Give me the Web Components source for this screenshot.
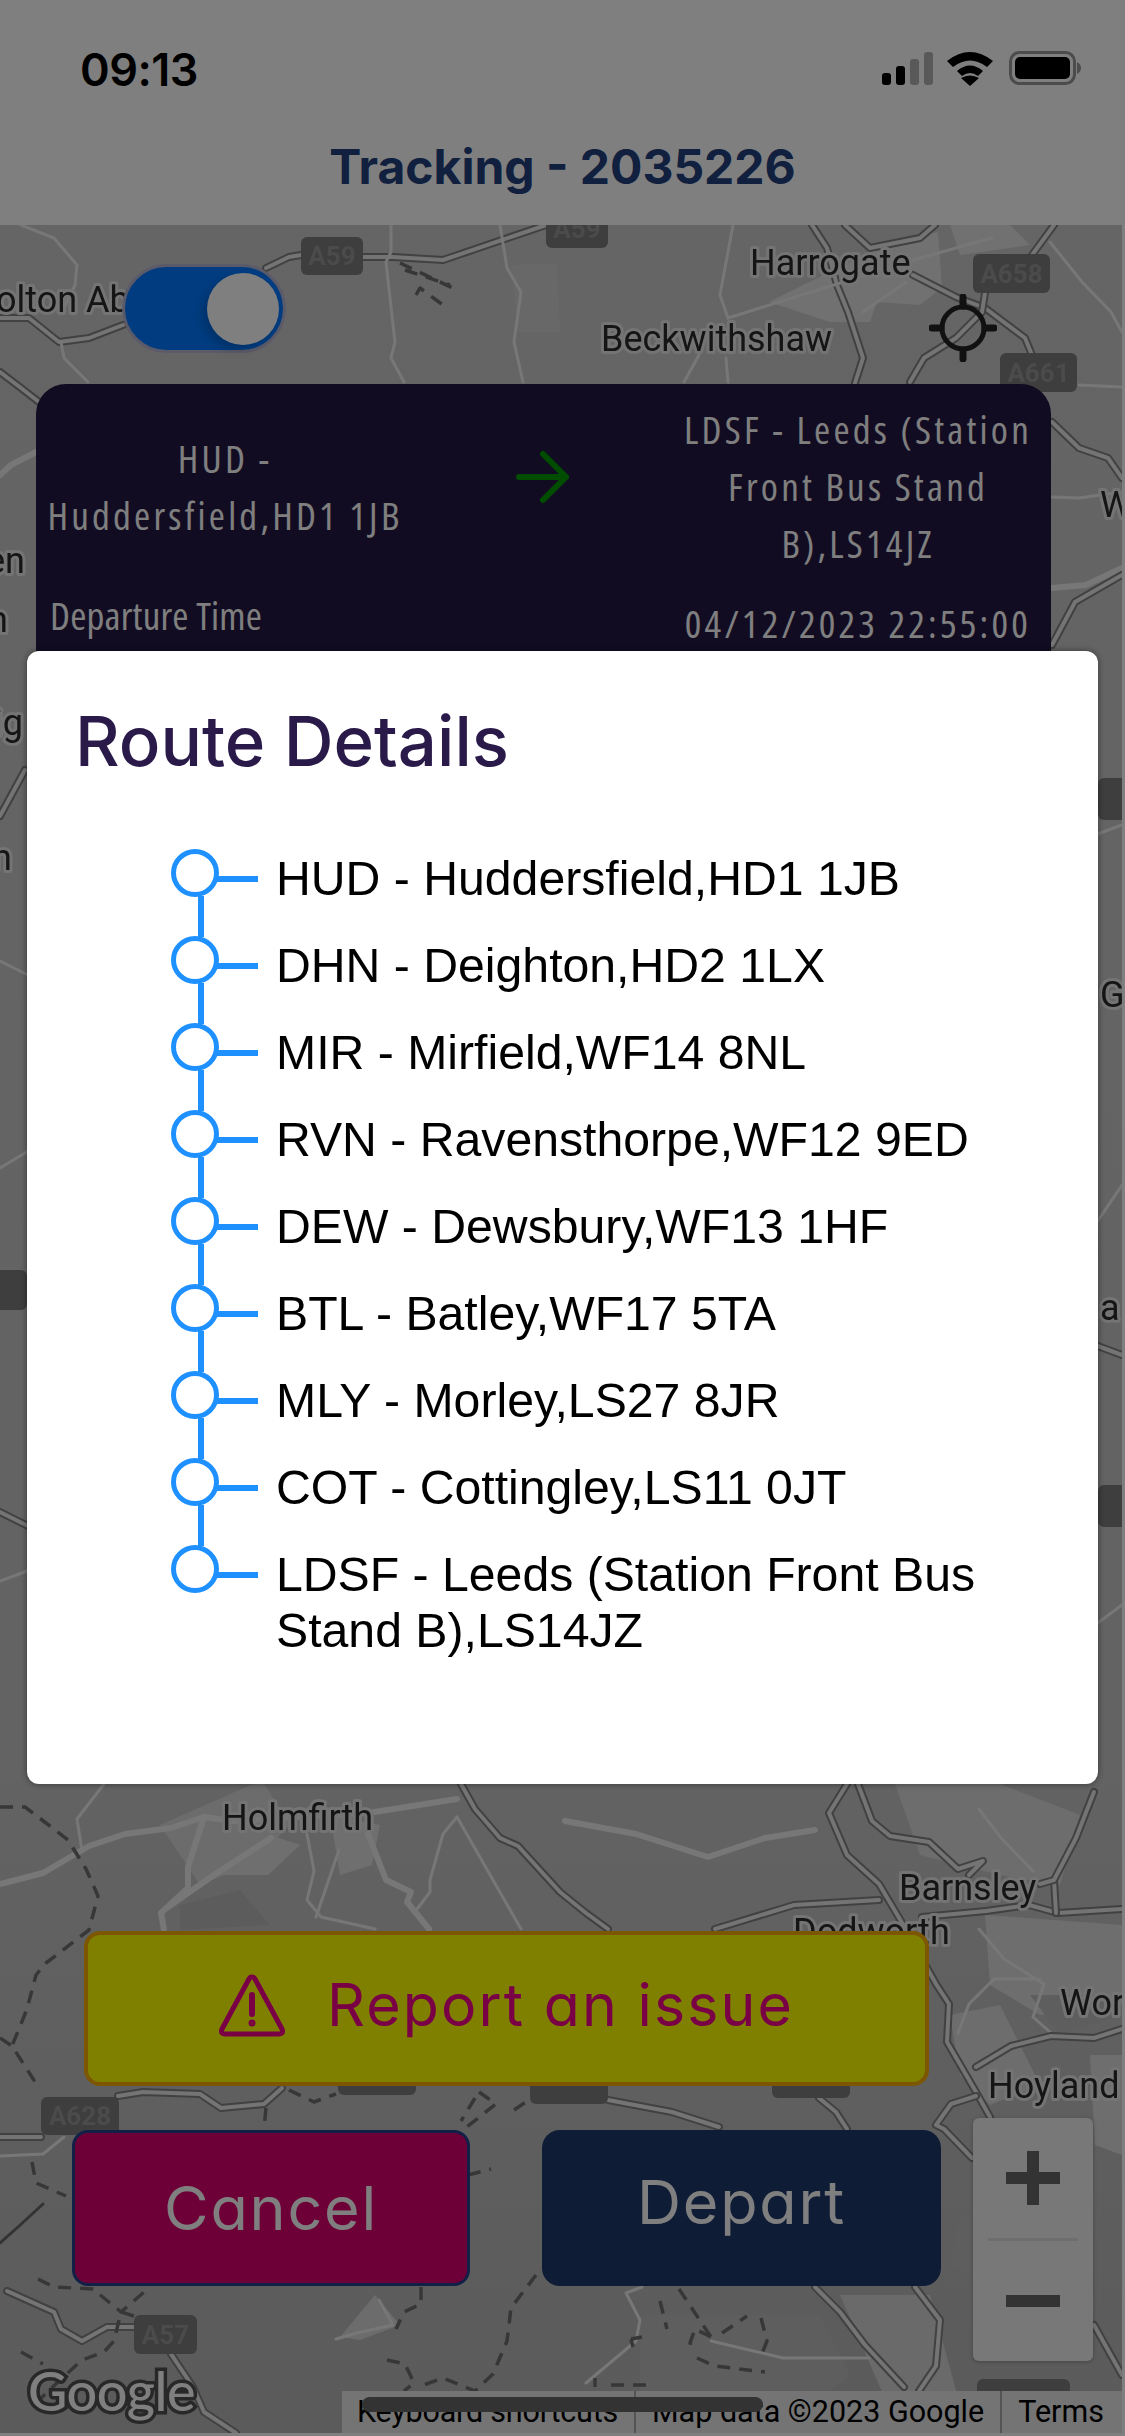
<!DOCTYPE html>
<html>
<head>
<meta charset="utf-8">
<title>Tracking</title>
<style>
html, body { margin: 0; padding: 0; background: #fff; }
</style>
</head>
<body>

<tracking-app>
    <status-bar slot="top" time="09:13"></status-bar>
    <app-header slot="top">Tracking - 2035226</app-header>

    <map-toolbar slot="map"></map-toolbar>
    <journey-card slot="map"
        from="HUD - Huddersfield,HD1 1JB"
        to="LDSF - Leeds (Station Front Bus Stand B),LS14JZ"
        time="04/12/2023 22:55:00"></journey-card>
    <action-bar slot="map"></action-bar>
    <map-chrome slot="map"></map-chrome>

    <route-modal slot="modal" heading="Route Details">
        <route-stop>HUD - Huddersfield,HD1 1JB</route-stop>
        <route-stop>DHN - Deighton,HD2 1LX</route-stop>
        <route-stop>MIR - Mirfield,WF14 8NL</route-stop>
        <route-stop>RVN - Ravensthorpe,WF12 9ED</route-stop>
        <route-stop>DEW - Dewsbury,WF13 1HF</route-stop>
        <route-stop>BTL - Batley,WF17 5TA</route-stop>
        <route-stop>MLY - Morley,LS27 8JR</route-stop>
        <route-stop>COT - Cottingley,LS11 0JT</route-stop>
        <route-stop last>LDSF - Leeds (Station Front Bus Stand B),LS14JZ</route-stop>
    </route-modal>
</tracking-app>

<script>
class TrackingApp extends HTMLElement {
    constructor() {
        super();
        this.attachShadow({mode: 'open'}).innerHTML = `
        <style>
            :host { display: block; position: relative; width: 1125px; height: 2436px; overflow: hidden; background: #fff; }
            .page { display: flex; flex-direction: column; height: 100%; }
            .stage { flex: 1; position: relative; margin: 0 3px 3px 0; min-height: 0; }
            .layer { position: relative; display: flex; flex-direction: column; height: 100%; box-sizing: border-box; padding-top: 39px; }
            .scrim { position: absolute; inset: 0; background: rgba(0,0,0,.5); }
            .modal { position: absolute; left: 27px; top: 651px; width: 1071px; }
        </style>
        <div class="page">
            <slot name="top"></slot>
            <div class="stage">
                <map-canvas></map-canvas>
                <div class="layer"><slot name="map"></slot></div>
            </div>
        </div>
        <div class="scrim"></div>
        <div class="modal"><slot name="modal"></slot></div>
        `;
    }
}

class StatusBar extends HTMLElement {
    constructor() {
        super();
        this.attachShadow({mode: 'open'}).innerHTML = `
        <style>
            :host { display: flex; align-items: center; justify-content: space-between; height: 138px; box-sizing: border-box; padding: 0 40px 0 80px; }
            .time { font: 600 45px Inter, sans-serif; color: #000; letter-spacing: -.5px; }
            svg { display: block; }
        </style>
        <span class="time">${this.getAttribute('time')}</span>
        <svg width="205" height="36" viewBox="0 0 205 36">
            <rect x="2" y="22" width="9" height="12" rx="3" fill="#000"/>
            <rect x="16" y="15" width="9" height="19" rx="3" fill="#000"/>
            <rect x="30" y="8" width="9" height="26" rx="3" fill="#000" opacity=".3"/>
            <rect x="44" y="1" width="9" height="33" rx="3" fill="#000" opacity=".3"/>
            <path d="M67 10 Q90 -8 113 10 L107 16 Q90 3 73 16 Z" fill="#000"/>
            <path d="M77 20 Q90 9 103 20 L98 25 Q90 19 82 25 Z" fill="#000"/>
            <path d="M90 35 L81 27 Q90 22 99 27 Z" fill="#000"/>
            <rect x="130.500" y="1.500" width="64" height="31" rx="9" fill="none" stroke="#000" stroke-opacity=".4" stroke-width="3"/>
            <rect x="135" y="6" width="55" height="22" rx="5" fill="#000"/>
            <path d="M197 11 Q201 13 201 17 Q201 21 197 23 Z" fill="#000" opacity=".4"/>
        </svg>
        `;
    }
}

class AppHeader extends HTMLElement {
    constructor() {
        super();
        this.attachShadow({mode: 'open'}).innerHTML = `
        <style>
            :host { display: flex; align-items: center; justify-content: center; box-sizing: border-box; height: 87px; padding-bottom: 30px; font: 700 48px Inter, sans-serif; color: #20407c; }
        </style>
        <slot></slot>
        `;
    }
}

// map data: coordinates are pixels inside the map box
const MAP_ROADS = [
    // top area
    ['l', '21,0 54,13 77,40 75,60 64,83'],
    ['c', '0,93 29,93 59,117 89,113 123,100'],
    ['c', '266,43 289,32 301,30'],
    ['c', '363,32 393,32 443,35 546,0'],
    ['l', '61,117 64,133 88,157'],
    ['l', '391,0 391,27 386,37 393,100 395,117 391,133 404,157'],
    ['l', '500,0 507,43 521,67 514,117 523,157'],
    ['c', '0,147 21,163 39,177'],
    ['t', '36,227 11,240 0,250'],
    ['c', '812,0 827,23 837,60 848,87 863,133 855,158'],
    ['c', '845,0 870,23 920,13 935,0'],
    ['c', '913,50 956,72 985,83 1025,113 1032,130'],
    ['c', '985,68 982,87 956,113 924,133 910,157'],
    ['c', '1054,0 1032,30'],
    ['l', '733,0 720,70 728,93'],
    ['l', '728,93 834,60 920,33 992,13'],
    ['l', '863,87 906,57'],
    ['l', '684,157 699,130'],
    ['l', '728,157 726,133'],
    ['l', '1050,17 1082,57 1111,87 1122,107'],
    ['l', '1079,160 1122,162'],
    ['c', '1052,197 1079,223 1108,233 1122,253'],
    ['l', '1052,272 1079,273 1122,267'],
    ['t', '1052,363 1086,360 1122,343'],
    ['c', '1052,420 1075,377 1122,350'],
    // edges beside the modal
    ['c', '0,591 25,545'],
    ['l', '0,736 30,751'],
    ['l', '0,943 30,925'],
    ['c', '0,1287 30,1302'],
    ['l', '0,1356 30,1345'],
    ['l', '1095,610 1122,600'],
    ['l', '1095,1000 1122,960'],
    ['c', '1095,1120 1122,1130'],
    ['l', '1095,1400 1122,1380'],
    // under the modal
    ['t', '0,1659 43,1648 89,1621 125,1609 171,1603 204,1592 232,1596 368,1588 457,1574'],
    ['l', '104,1559 77,1594 82,1626'],
    ['t', '204,1592 196,1617 188,1642 188,1663 161,1688 164,1705'],
    ['t', '271,1613 214,1650 168,1682'],
    ['l', '307,1609 314,1646 307,1675 321,1692 375,1704'],
    ['l', '339,1625 316,1692'],
    ['t', '368,1609 386,1655 411,1667 407,1677 429,1704'],
    ['l', '457,1592 443,1609 430,1655 430,1667 414,1688'],
    ['l', '457,1592 521,1704'],
    ['c', '461,1559 475,1584 500,1613 518,1621 560,1667 586,1688 608,1704'],
    ['t', '565,1596 636,1609 708,1632 765,1613 815,1605'],
    ['c', '847,1559 829,1588 847,1630 879,1659 901,1696 936,1759 949,1779 947,1817 976,1867 990,1892'],
    ['c', '858,1559 872,1596 890,1611 929,1617 958,1644 983,1636 969,1650'],
    ['c', '922,1692 986,1686 1029,1680 1058,1688 1122,1684'],
    ['c', '715,1704 794,1680 879,1675'],
    ['c', '1054,1655 1056,1688'],
    ['c', '1040,1659 1054,1655 1076,1613 1094,1567'],
    ['l', '979,1584 1001,1613 1033,1646'],
    ['l', '979,1704 1004,1734 1044,1759 1033,1792 1051,1808'],
    ['l', '958,1808 969,1779 994,1754 1040,1754'],
    ['c', '976,1842 1011,1821 1051,1811 1094,1813 1122,1804'],
    ['c', '976,1871 951,1879 936,1900 944,1904 972,1933'],
    ['c', '608,1875 672,1887 719,1902'],
    ['c', '819,1873 836,1887 847,1904'],
    // around the buttons
    ['c', '118,1871 143,1867 200,1869 221,1883 264,1879 282,1863'],
    ['c', '0,1912 41,1912'],
    ['l', '0,1931 43,1929 64,1912'],
    ['k', '0,2018 18,2002 43,1979'],
    ['c', '7,2066 54,2087 61,2104 82,2116 107,2102 134,2102'],
    ['c', '171,2129 193,2162 204,2187 236,2208'],
    ['l', '379,2075 393,2100 357,2108 336,2114'],
    ['c', '815,2062 840,2087 865,2120 904,2162'],
    ['c', '915,2062 940,2095 936,2141 919,2166'],
    ['l', '642,2062 626,2068 640,2095 636,2116 586,2158'],
    ['c', '1094,2100 1122,2150'],
    ['l', '711,2116 783,2133 869,2133'],
    ['l', '1000,1960 1050,2000 1040,2090 1060,2120'],
    // dashed tracks
    ['d', '400,38 457,65'],
    ['d', '405,45 450,60'],
    ['d', '416,70 420,63 443,80'],
    ['d', '0,1582 25,1582 46,1598 68,1615 86,1644 98,1671 89,1705 46,1738 36,1750 27,1784 12,1821 39,1863'],
    ['d', '0,1813 12,1821'],
    ['d', '266,1883 264,1904'],
    ['d', '289,1865 314,1877 336,1869'],
    ['d', '32,1937 36,1958 66,1971'],
    ['d', '38,2054 54,2062 93,2064 121,2087 150,2062'],
    ['d', '134,2091 121,2087 114,2116 104,2127 82,2135 61,2154 36,2178'],
    ['d', '21,2127 43,2139'],
    ['d', '421,2062 421,2079 404,2087 396,2104'],
    ['d', '387,2135 405,2139 414,2158 404,2166'],
    ['d', '536,2050 511,2083 507,2116 493,2149 475,2166 443,2153 418,2162'],
    ['d', '479,1867 496,1879 464,1904'],
    ['d', '475,1873 461,1896'],
    ['d', '514,1885 532,1873'],
    ['d', '468,1950 491,1944'],
    ['d', '679,2064 711,2112'],
    ['d', '660,2076 667,2104'],
    ['d', '722,2108 747,2091'],
    ['d', '761,2093 767,2116 761,2131'],
    ['d', '697,2133 715,2141 765,2147'],
    ['d', '711,2112 695,2104 690,2118 701,2120'],
    ['d', '631,2114 642,2112'],
    ['d', '631,2114 633,2122'],
    ['d', '595,2153 595,2162'],
    ['d', '611,2160 647,2160']
];

const MAP_AREAS = [
    ['#d0d0d0', '511,40 557,38 560,107 518,107'],
    ['#e2e2e2', '938,7 942,63 920,80 877,77 870,97 830,97 769,77 884,20'],
    ['#e2e2e2', '950,0 1010,0 1030,20 960,30'],
    ['#d8d8d8', '160,1600 262,1555 290,1600 250,1640 200,1660'],
    ['#dedede', '214,1650 270,1610 300,1620 268,1650'],
    ['#dedede', '330,1590 380,1600 372,1640 340,1650'],
    ['#b8b8b8', '180,1680 240,1665 270,1700 180,1705'],
    ['#dadada', '895,1559 1000,1559 1080,1590 1060,1660 1000,1650 920,1630'],
    ['#dcdcdc', '985,1690 1122,1700 1122,1780 1040,1790 990,1760'],
    ['#dadada', '950,1790 1000,1780 1040,1860 990,1880 960,1850'],
    ['#bcbcbc', '1030,1770 1100,1770 1122,1790 1060,1810'],
    ['#dcdcdc', '1090,1830 1122,1830 1122,1930 1095,1920'],
    ['#bcbcbc', '640,2090 820,2090 850,2150 780,2208 640,2208'],
    ['#d4d4d4', '840,2070 930,2070 960,2180 900,2208'],
    ['#bcbcbc', '960,1990 1000,2000 990,2060 950,2040'],
    ['#d8d8d8', '375,2070 400,2100 360,2115 340,2112']
];

const MAP_SHIELDS = [
    ['A59', 301, 12, 62, 38], ['A59', 546, -15, 62, 38], ['A658', 973, 29, 77, 39], ['A661', 1000, 128, 77, 39],
    ['A628', 41, 1872, 78, 38], ['A57', 134, 2090, 63, 39], ['', 338, 1832, 78, 38], ['', 530, 1841, 78, 38],
    ['', 772, 1835, 78, 38], ['', 977, 2154, 93, 54], ['', -40, 1045, 67, 40], ['', 1098, 553, 60, 42], ['', 1098, 1260, 60, 42]
];

const MAP_LABELS = [
    ['olton Ab', -4, 87], ['Harrogate', 750, 50], ['Beckwithshaw', 601, 126], ['W', 1100, 292],
    ['en', -14, 348], ['n', -12, 407], ['ig', -6, 510], ['G', 1100, 782], ['n', -8, 645], ['a', 1100, 1095],
    ['Holmfirth', 222, 1605], ['Barnsley', 899, 1675], ['Dodworth', 793, 1719], ['Wor', 1060, 1790], ['Hoyland', 988, 1873]
];

class MapCanvas extends HTMLElement {
    constructor() {
        super();
        const roads = MAP_ROADS.map(r => {
            if (r[0] === 'c') {
                return `<polyline class="case" points="${r[1]}"/><polyline class="inner" points="${r[1]}"/>`;
            }
            return `<polyline class="${r[0]}" points="${r[1]}"/>`;
        }).join('');
        this.attachShadow({mode: 'open'}).innerHTML = `
        <style>
            :host { position: absolute; inset: 0; display: block; overflow: hidden; background: #c8c8c8; }
            svg { display: block; width: 100%; height: 100%; filter: blur(.5px); }
            text { font-family: Roboto, sans-serif; }
            polyline { fill: none; stroke-linejoin: round; stroke-linecap: round; }
            .label { font-size: 36px; fill: #2a2a2a; paint-order: stroke; stroke: #e8e8e8; stroke-width: 6px; stroke-linejoin: round; }
            .shield { font-size: 26px; font-weight: 700; text-anchor: middle; fill: #969696; }
            .l { stroke: #eee; stroke-width: 3; }
            .t { stroke: #eee; stroke-width: 6; }
            .k { stroke: #666; stroke-width: 3; }
            .case { stroke: #828282; stroke-width: 8; }
            .inner { stroke: #e8e8e8; stroke-width: 4; }
            .d { stroke: #6e6e6e; stroke-width: 3.500; stroke-dasharray: 13 9; stroke-linecap: butt; }
        </style>
        <svg viewBox="0 0 1122 2208" preserveAspectRatio="none">
            <defs><linearGradient id="g" x1="0" y1="0" x2="0" y2="1">
                <stop offset="0" stop-color="#cacaca"/><stop offset=".7" stop-color="#c6c6c6"/><stop offset="1" stop-color="#b6b6b6"/>
            </linearGradient></defs>
            <rect width="1122" height="2208" fill="url(#g)"/>
            ${MAP_AREAS.map(a => `<polygon fill="${a[0]}" points="${a[1]}"/>`).join('')}
            ${roads}
            ${MAP_SHIELDS.map(s => `<rect x="${s[1]}" y="${s[2]}" width="${s[3]}" height="${s[4]}" rx="6" fill="#7c7c7c"/>
            <text class="shield" x="${s[1] + s[3] / 2}" y="${s[2] + s[4] / 2 + 9}">${s[0]}</text>`).join('')}
            ${MAP_LABELS.map(l => `<text class="label" x="${l[1]}" y="${l[2]}">${l[0]}</text>`).join('')}
        </svg>
        `;
    }
}

class MapToolbar extends HTMLElement {
    constructor() {
        super();
        this.attachShadow({mode: 'open'}).innerHTML = `
        <style>
            :host { display: flex; align-items: center; justify-content: space-between; flex: none; height: 89px; padding: 0 125px 0 122px; margin-bottom: 31px; }
            .switch { box-sizing: border-box; width: 164px; height: 89px; border-radius: 45px; background: #0078ff; border: 3px solid #b4b4d4; display: flex; align-items: center; justify-content: flex-end; padding-right: 4px; }
            .knob { width: 72px; height: 72px; border-radius: 50%; background: #fff; box-shadow: -5px 5px 8px rgba(0,0,0,.16); }
            svg { display: block; margin-top: 38px; }
        </style>
        <div class="switch"><div class="knob"></div></div>
        <svg width="68" height="68" viewBox="0 0 68 68" fill="none" stroke="#222" stroke-linecap="round">
            <circle cx="34" cy="34" r="21" stroke-width="5"/>
            <path d="M34 3 V12 M34 56 V65 M3 34 H12 M56 34 H65" stroke-width="7"/>
        </svg>
        `;
    }
}

class JourneyCard extends HTMLElement {
    constructor() {
        super();
        this.attachShadow({mode: 'open'}).innerHTML = `
        <style>
            :host { display: block; flex: none; box-sizing: border-box; margin: 0 71px 0 36px; height: 300px; padding: 16px 20px 0 14px; border-radius: 30px; background: #241844; color: #fff; font: 500 39px/57px "Open Sans", sans-serif; font-stretch: 75%; letter-spacing: 3.200px; }
            .route { display: grid; grid-template-columns: 350px 1fr 346px; align-items: center; text-align: center; height: 171px; }
            .route div { margin: 0 -8px; }
            svg { display: block; justify-self: center; margin-top: -18px; }
            .times { display: flex; justify-content: space-between; align-items: center; margin-top: 15px; white-space: nowrap; }
            .label { font-weight: 400; letter-spacing: .2px; margin-bottom: 16px; }
        </style>
        <div class="route">
            <div>${this.getAttribute('from')}</div>
            <svg width="54" height="54" viewBox="0 0 54 54" fill="none" stroke="#009a00" stroke-width="6" stroke-linecap="round" stroke-linejoin="round">
                <path d="M3 27 H50 M27 4 L50 27 L27 50"/>
            </svg>
            <div>${this.getAttribute('to')}</div>
        </div>
        <div class="times">
            <span class="label">Departure Time</span>
            <span>${this.getAttribute('time')}</span>
        </div>
        `;
    }
}

class ActionBar extends HTMLElement {
    constructor() {
        super();
        this.attachShadow({mode: 'open'}).innerHTML = `
        <style>
            :host { display: block; flex: none; margin-top: auto; padding-bottom: 147px; font: 400 61px Inter, sans-serif; font-feature-settings: "cv11"; letter-spacing: 1.800px; }
            .btn { box-sizing: border-box; display: flex; align-items: center; justify-content: center; border-radius: 16px; height: 156px; }
            .report { margin: 0 193px 44px 84px; background: #ffff00; border: 4px solid #f8ac00; color: #f4008a; gap: 42px; height: 155px; padding-bottom: 9px; font-size: 59px; letter-spacing: 2.100px; }
            .report svg { flex: none; margin-top: 2px; }
            .row { display: grid; grid-template-columns: 398px 399px; gap: 72px; padding-left: 72px; }
            .cancel { background: #dc0070; border: 3px solid #244090; color: #fff; }
            .depart { background: #1e386c; color: #fff; padding-bottom: 12px; border-radius: 18px; }
        </style>
        <div class="btn report">
            <svg width="66" height="63" viewBox="0 0 66 63" fill="none" stroke="#f4008a" stroke-width="5" stroke-linecap="round" stroke-linejoin="round">
                <path d="M33 3 Q35 3 36 5 L63 55 Q65 60 60 60 H6 Q1 60 3 55 L30 5 Q31 3 33 3 Z"/>
                <path d="M33 21 V40" stroke-width="6"/>
                <circle cx="33" cy="49" r="1.500" stroke-width="4"/>
            </svg>
            <span>Report an issue</span>
        </div>
        <div class="row">
            <div class="btn cancel">Cancel</div>
            <div class="btn depart">Depart</div>
        </div>
        `;
    }
}

class MapChrome extends HTMLElement {
    constructor() {
        super();
        this.attachShadow({mode: 'open'}).innerHTML = `
        <style>
            :host { position: absolute; inset: 0; display: block; }
            .zoom { position: absolute; left: 973px; top: 1893px; width: 120px; height: 243px; border-radius: 6px; background: #f0f0f0; display: flex; flex-direction: column; align-items: center; box-shadow: 0 1px 4px rgba(0,0,0,.25); }
            .zoom div { flex: 1; display: flex; align-items: center; justify-content: center; width: 90px; }
            .zoom div + div { border-top: 3px solid #dcdcdc; }
            .zoom svg { display: block; }
            .attr { position: absolute; left: 342px; right: 0; bottom: 0; height: 42px; background: #e8e8e8; color: #000; display: flex; align-items: center; font: 30.500px Roboto, sans-serif; white-space: nowrap; }
            .attr span { padding: 0 16px; line-height: 42px; }
            .attr span:first-child { padding-left: 15px; letter-spacing: -.2px; }
            .attr span + span { border-left: 2px solid #a8a8a8; }
            .logo { position: absolute; left: 28px; bottom: 10px; font: 500 54px Lato, sans-serif; color: #fff; paint-order: stroke; -webkit-text-stroke: 7px #505050; letter-spacing: -.5px; }
            .home { position: absolute; left: 362px; bottom: 21px; width: 401px; height: 15px; border-radius: 8px; background: #666; }
        </style>
        <div class="zoom">
            <div><svg width="54" height="54" viewBox="0 0 54 54" fill="#666"><path d="M21 0 H33 V21 H54 V33 H33 V54 H21 V33 H0 V21 H21 Z"/></svg></div>
            <div><svg width="54" height="12" viewBox="0 0 54 12" fill="#666"><rect width="54" height="12"/></svg></div>
        </div>
        <div class="logo">Google</div>
        <div class="attr"><span>Keyboard shortcuts</span><span>Map data ©2023 Google</span><span>Terms</span></div>
        <div class="home"></div>
        `;
    }
}

class RouteModal extends HTMLElement {
    constructor() {
        super();
        this.attachShadow({mode: 'open'}).innerHTML = `
        <style>
            :host { display: block; box-sizing: border-box; height: 1133px; padding: 44px 60px 0 49px; background: #fff; border-radius: 12px; box-shadow: 0 0 6px rgba(0,0,0,.45); }
            h2 { margin: 0 0 62px -1px; font: 500 69px/92px Inter, sans-serif; color: #2a1a4a; }
            .stops { padding-left: 95px; }
        </style>
        <h2>${this.getAttribute('heading')}</h2>
        <div class="stops"><slot></slot></div>
        `;
    }
}

class RouteStop extends HTMLElement {
    constructor() {
        super();
        this.attachShadow({mode: 'open'}).innerHTML = `
        <style>
            :host { display: grid; grid-template-columns: 105px 1fr; font: 48.200px/56px "Liberation Sans", Arial, sans-serif; color: #000; }
            .mark { position: relative; height: 87px; }
            .dot { box-sizing: border-box; width: 48px; height: 48px; border: 5.500px solid #1e90ff; border-radius: 50%; }
            .tick { position: absolute; left: 46px; top: 27px; width: 41px; height: 6px; background: #1e90ff; }
            .stem { position: absolute; left: 27px; top: 47px; width: 6px; height: 41px; background: #1e90ff; }
            :host([last]) .stem { display: none; }
            .text { padding-bottom: 31px; padding-top: 1px; margin-bottom: -1px; }
        </style>
        <div class="mark"><div class="dot"></div><div class="tick"></div><div class="stem"></div></div>
        <div class="text"><slot></slot></div>
        `;
    }
}

customElements.define('tracking-app', TrackingApp);
customElements.define('status-bar', StatusBar);
customElements.define('app-header', AppHeader);
customElements.define('map-canvas', MapCanvas);
customElements.define('map-toolbar', MapToolbar);
customElements.define('journey-card', JourneyCard);
customElements.define('action-bar', ActionBar);
customElements.define('map-chrome', MapChrome);
customElements.define('route-modal', RouteModal);
customElements.define('route-stop', RouteStop);
</script>
</body>
</html>
